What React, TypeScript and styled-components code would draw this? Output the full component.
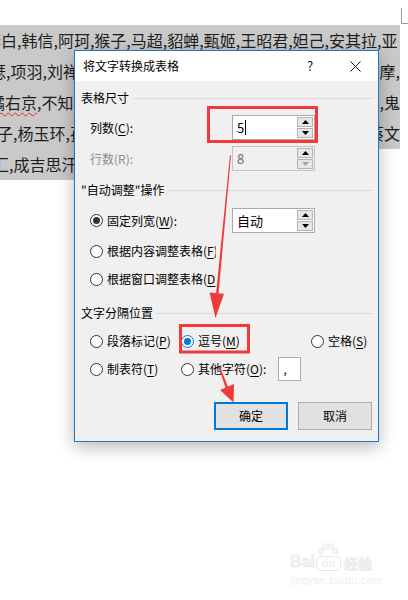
import React from 'react';
import styled, { createGlobalStyle } from 'styled-components';

const GlobalStyle = createGlobalStyle`
  html, body { margin: 0; padding: 0; background: #fff; }
  body { font-family: "Noto Sans CJK SC", "Noto Sans", sans-serif; }
  * { box-sizing: border-box; }
`;

const Page = styled.div`
  position: relative;
  width: 408px;
  height: 600px;
  overflow: hidden;
  background: #fff;
`;

const Doc = styled.div`
  padding-top: 25px;
  display: flex;
  flex-direction: column;
  font-size: 16px;
  line-height: 31px;
  color: #1e1e1e;
`;

const Line = styled.div<{ $w?: number }>`
  width: ${p => p.$w ?? 400}px;
  height: 31px;
  background: #c9c9c9;
  display: flex;
  justify-content: space-between;
  white-space: nowrap;
  overflow: hidden;
`;

const Seg = styled.span<{ $shift?: number }>`
  margin-left: ${p => p.$shift ?? 0}px;
  flex-shrink: 0;
`;

const Squiggle = styled.span`
  text-decoration: underline wavy #e02b2b;
  text-decoration-thickness: 1px;
  text-underline-offset: 3px;
`;

const Dialog = styled.div`
  position: absolute;
  left: 74px;
  top: 50px;
  width: 305px;
  height: 392px;
  border: 1px solid #1979ca;
  background: #f0f0f0;
  box-shadow: 0 5px 16px rgba(0, 0, 0, 0.28);
  display: flex;
  flex-direction: column;
  font-size: 12px;
  line-height: 16px;
  color: #000;
`;

const TitleBar = styled.div`
  height: 30px;
  background: #fff;
  display: flex;
  align-items: center;
  flex-shrink: 0;
`;

const Title = styled.div`
  flex: 1;
  padding-left: 8px;
  font-size: 12px;
`;

const TitleButton = styled.div<{ $w: number }>`
  width: ${p => p.$w}px;
  height: 30px;
  display: flex;
  align-items: center;
  justify-content: center;
  font-size: 13px;
  color: #111;
`;

const Body = styled.div`
  flex: 1;
  padding: 7px 5px 0 6px;
  display: flex;
  flex-direction: column;
`;

const SectionHeader = styled.div<{ $mt?: number }>`
  display: flex;
  align-items: center;
  gap: 4px;
  height: 20px;
  margin-top: ${p => p.$mt ?? 0}px;
  &::after {
    content: '';
    flex: 1;
    height: 1px;
    background: #dadada;
  }
`;

const FieldRow = styled.div<{ $mt: number; $h?: number }>`
  display: flex;
  align-items: center;
  height: ${p => p.$h ?? 25}px;
  margin-top: ${p => p.$mt}px;
  padding-left: 9px;
`;

const FieldLabel = styled.div<{ $disabled?: boolean }>`
  width: 142px;
  flex-shrink: 0;
  display: flex;
  align-items: center;
  color: ${p => (p.$disabled ? '#8d8d8d' : '#000')};
`;

const SpinBox = styled.div<{ $disabled?: boolean }>`
  width: 83px;
  height: 25px;
  border: 1px solid ${p => (p.$disabled ? '#c2c2c2' : '#a9a9a9')};
  background: ${p => (p.$disabled ? '#f0f0f0' : '#fff')};
  display: flex;
  padding: 1px;
`;

const SpinValue = styled.div<{ $disabled?: boolean }>`
  flex: 1;
  display: flex;
  align-items: center;
  padding-left: 3px;
  font-size: 13px;
  color: ${p => (p.$disabled ? '#6d6d6d' : '#000')};
`;

const Caret = styled.span`
  width: 1px;
  height: 15px;
  background: #000;
  margin-left: 1px;
`;

const SpinButtons = styled.div`
  width: 16px;
  display: flex;
  flex-direction: column;
  justify-content: space-between;
`;

const SpinButton = styled.div<{ $dim?: boolean }>`
  height: 10px;
  border: 1px solid #b4b4b4;
  background: #e6e6e6;
  display: flex;
  align-items: center;
  justify-content: center;
  color: ${p => (p.$dim ? '#a5a5a5' : '#000')};
`;

const Radio = styled.span<{ $checked?: boolean; $focus?: boolean }>`
  width: 13px;
  height: 13px;
  border-radius: 50%;
  border: 1px solid ${p => (p.$focus ? '#0078d7' : '#333')};
  background: #fff;
  display: inline-flex;
  align-items: center;
  justify-content: center;
  flex-shrink: 0;
  margin-right: 4px;
  &::after {
    content: '';
    width: 7px;
    height: 7px;
    border-radius: 50%;
    background: ${p => (p.$focus ? '#0078d7' : '#333')};
    display: ${p => (p.$checked ? 'block' : 'none')};
  }
`;

const Option = styled.div`
  display: flex;
  align-items: center;
  white-space: nowrap;
`;

const OptionText = styled.span<{ $max?: number }>`
  display: inline-block;
  overflow: hidden;
  max-width: ${p => (p.$max ? `${p.$max}px` : 'none')};
`;

const U = styled.span`
  text-decoration: underline;
  text-underline-offset: 2px;
`;

const OptionGrid = styled.div`
  display: grid;
  grid-template-columns: 91px 130px 1fr;
  grid-auto-rows: 28px;
  margin-top: 4px;
  padding-left: 9px;
  align-items: center;
`;

const CharBox = styled.div`
  width: 23px;
  height: 24px;
  margin-left: 12px;
  border: 1px solid #ababab;
  background: #fff;
  padding-left: 4px;
  display: flex;
  align-items: center;
  font-size: 12px;
`;

const ButtonRow = styled.div`
  display: flex;
  justify-content: flex-end;
  gap: 10px;
  margin-top: 19px;
  padding-right: 1px;
`;

const Button = styled.div<{ $primary?: boolean }>`
  width: 74px;
  height: 28px;
  background: #e1e1e1;
  border: ${p => (p.$primary ? '2px solid #0078d7' : '1px solid #adadad')};
  display: flex;
  align-items: center;
  justify-content: center;
  font-size: 12px;
`;

const Overlay = styled.svg`
  position: absolute;
  left: 0;
  top: 0;
  pointer-events: none;
`;

const Watermark = styled.div`
  position: absolute;
  left: 290px;
  top: 543px;
  display: flex;
  flex-direction: column;
  align-items: flex-start;
  color: #f0f0f0;
  font-family: "Liberation Sans", Arial, sans-serif;
  pointer-events: none;
`;

const WmTop = styled.div`
  display: flex;
  align-items: flex-end;
  gap: 1px;
`;

const WmBai = styled.span`
  font-size: 16px;
  font-weight: bold;
  line-height: 18px;
  color: #f4f4f4;
  -webkit-text-stroke: 0.6px #e6e6e6;
`;

const WmPaw = styled.div`
  display: flex;
  flex-direction: column;
  align-items: center;
`;

const WmDu = styled.span`
  display: inline-block;
  width: 25px;
  height: 15px;
  border-radius: 4px;
  border: 1px solid #e8e8e8;
  font-size: 11px;
  line-height: 13px;
  text-align: center;
  font-weight: bold;
  color: #eeeeee;
`;

const WmJy = styled.span`
  font-family: "Noto Sans CJK SC", sans-serif;
  font-size: 14px;
  line-height: 16px;
  font-weight: bold;
  margin-left: 2px;
  color: #f0f0f0;
  -webkit-text-stroke: 0.4px #e6e6e6;
`;

const WmUrl = styled.span`
  font-size: 11px;
  line-height: 13px;
  margin-top: 3px;
  color: #efefef;
  letter-spacing: 0.2px;
`;

const UpTri = () => (
  <svg width="7" height="4" viewBox="0 0 7 4"><polygon points="0,4 7,4 3.5,0" fill="currentColor" /></svg>
);
const DownTri = () => (
  <svg width="7" height="4" viewBox="0 0 7 4"><polygon points="0,0 7,0 3.5,4" fill="currentColor" /></svg>
);

const Spin: React.FC<{ value: string; disabled?: boolean; caret?: boolean }> = ({ value, disabled, caret }) => (
  <SpinBox $disabled={disabled}>
    <SpinValue $disabled={disabled}>
      {value}
      {caret && <Caret />}
    </SpinValue>
    <SpinButtons>
      <SpinButton><UpTri /></SpinButton>
      <SpinButton $dim={disabled}><DownTri /></SpinButton>
    </SpinButtons>
  </SpinBox>
);

export default function App() {
  return (
    <Page>
      <GlobalStyle />
      <Doc>
        <Line>
          <Seg $shift={-15}>李白,韩信,阿珂,猴子,马超,貂蝉,甄姬,王昭君,妲己,安其拉,亚</Seg>
        </Line>
        <Line>
          <Seg $shift={-10}>瑟,项羽,刘禅,庄周</Seg>
          <Seg>,达摩,</Seg>
        </Line>
        <Line>
          <Seg $shift={-11}><Squiggle>橘右京</Squiggle>,不知火舞</Seg>
          <Seg>隐,鬼</Seg>
        </Line>
        <Line>
          <Seg $shift={-3}>子,杨玉环,孙膑</Seg>
          <Seg>蔡文</Seg>
        </Line>
        <Line $w={110}>
          <Seg $shift={-7}>汇,成吉思汗</Seg>
        </Line>
      </Doc>

      <Watermark>
        <WmTop>
          <WmBai>Bai</WmBai>
          <WmPaw>
            <svg width="24" height="13" viewBox="0 0 24 13">
              <g fill="#f6f6f6" stroke="#e6e6e6" strokeWidth="0.8">
                <ellipse cx="5" cy="8" rx="2.5" ry="3" />
                <ellipse cx="9.5" cy="3.5" rx="2.5" ry="3" />
                <ellipse cx="15" cy="3.5" rx="2.5" ry="3" />
                <ellipse cx="19.5" cy="8" rx="2.5" ry="3" />
              </g>
            </svg>
            <WmDu>du</WmDu>
          </WmPaw>
          <WmJy>经验</WmJy>
        </WmTop>
        <WmUrl>jingyan.baidu.com</WmUrl>
      </Watermark>

      <Dialog>
        <TitleBar>
          <Title>将文字转换成表格</Title>
          <TitleButton $w={46}>?</TitleButton>
          <TitleButton $w={45}>
            <svg width="11" height="11" viewBox="0 0 11 11">
              <path d="M0.5 0.5 L10.5 10.5 M10.5 0.5 L0.5 10.5" stroke="#111" strokeWidth="1" />
            </svg>
          </TitleButton>
        </TitleBar>
        <Body>
          <SectionHeader>表格尺寸</SectionHeader>
          <FieldRow $mt={7}>
            <FieldLabel>列数(<U>C</U>):</FieldLabel>
            <Spin value="5" caret />
          </FieldRow>
          <FieldRow $mt={6}>
            <FieldLabel $disabled>行数(R):</FieldLabel>
            <Spin value="8" disabled />
          </FieldRow>

          <SectionHeader $mt={9}>"自动调整"操作</SectionHeader>
          <FieldRow $mt={8}>
            <FieldLabel>
              <Option>
                <Radio $checked />
                <OptionText>固定列宽(<U>W</U>):</OptionText>
              </Option>
            </FieldLabel>
            <Spin value="自动" />
          </FieldRow>
          <FieldRow $mt={4} $h={28}>
            <Option>
              <Radio />
              <OptionText $max={109}>根据内容调整表格(<U>F</U>)</OptionText>
            </Option>
          </FieldRow>
          <FieldRow $mt={0} $h={28}>
            <Option>
              <Radio />
              <OptionText $max={109}>根据窗口调整表格(<U>D</U>)</OptionText>
            </Option>
          </FieldRow>

          <SectionHeader $mt={10}>文字分隔位置</SectionHeader>
          <OptionGrid>
            <Option>
              <Radio />
              <OptionText>段落标记(<U>P</U>)</OptionText>
            </Option>
            <Option>
              <Radio $checked $focus />
              <OptionText>逗号(<U>M</U>)</OptionText>
            </Option>
            <Option>
              <Radio />
              <OptionText>空格(<U>S</U>)</OptionText>
            </Option>
            <Option>
              <Radio />
              <OptionText>制表符(<U>T</U>)</OptionText>
            </Option>
            <Option>
              <Radio />
              <OptionText>其他字符(<U>O</U>):</OptionText>
              <CharBox>,</CharBox>
            </Option>
          </OptionGrid>

          <ButtonRow>
            <Button $primary>确定</Button>
            <Button>取消</Button>
          </ButtonRow>
        </Body>
      </Dialog>

      <Overlay width="408" height="600" viewBox="0 0 408 600">
        <path d="M401.5 8 V23.5 H408" fill="none" stroke="#9a9a9a" strokeWidth="1" />
        <rect x="208.5" y="107.5" width="108" height="34" fill="none" stroke="#f03a3a" strokeWidth="3" />
        <rect x="180.5" y="325.5" width="68" height="26.5" fill="none" stroke="#f03a3a" strokeWidth="3" />
        <polygon points="230,155 231,155.2 218.5,294 216,294" fill="#f03a3a" />
        <polygon points="209.5,292.5 224,293.8 215.5,318" fill="#f03a3a" />
        <polygon points="218.5,367 219.8,366.6 228.5,388 226,389" fill="#f03a3a" />
        <polygon points="220,390 234,384 233.5,402.5" fill="#f03a3a" />
      </Overlay>
    </Page>
  );
}
